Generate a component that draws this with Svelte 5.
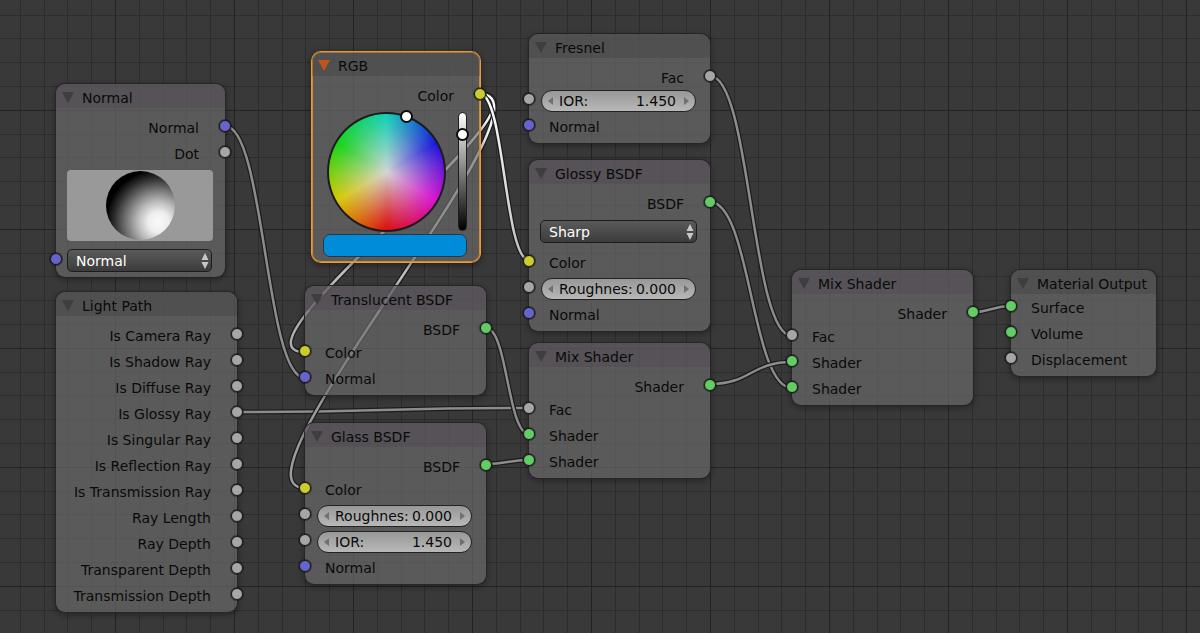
<script lang="ts">
  type Row = { label: string; type?: string; kind?: string; value?: string };
  type Node = {
    id: string;
    title: string;
    x: number;
    y: number;
    width: number;
    tint?: boolean;
    selected?: boolean;
    outputs?: Row[];
    dropdown?: string;
    inputs?: Row[];
  };

  const nodes: Node[] = [
    {
      id: 'normal', title: 'Normal', x: 56, y: 84, width: 169, tint: true,
      outputs: [{ label: 'Normal', type: 'vector' }, { label: 'Dot', type: 'value' }]
    },
    {
      id: 'light', title: 'Light Path', x: 56, y: 292, width: 181,
      outputs: [
        'Is Camera Ray', 'Is Shadow Ray', 'Is Diffuse Ray', 'Is Glossy Ray',
        'Is Singular Ray', 'Is Reflection Ray', 'Is Transmission Ray', 'Ray Length',
        'Ray Depth', 'Transparent Depth', 'Transmission Depth'
      ].map((label) => ({ label, type: 'value' }))
    },
    {
      id: 'rgb', title: 'RGB', x: 312, y: 52, width: 168, selected: true,
      outputs: [{ label: 'Color', type: 'color' }]
    },
    {
      id: 'translucent', title: 'Translucent BSDF', x: 305, y: 286, width: 181, tint: true,
      outputs: [{ label: 'BSDF', type: 'shader' }],
      inputs: [{ label: 'Color', type: 'color' }, { label: 'Normal', type: 'vector' }]
    },
    {
      id: 'glass', title: 'Glass BSDF', x: 305, y: 423, width: 181, tint: true,
      outputs: [{ label: 'BSDF', type: 'shader' }],
      inputs: [
        { label: 'Color', type: 'color' },
        { label: 'Roughnes:', type: 'value', value: '0.000' },
        { label: 'IOR:', type: 'value', value: '1.450' },
        { label: 'Normal', type: 'vector' }
      ]
    },
    {
      id: 'fresnel', title: 'Fresnel', x: 529, y: 34, width: 181,
      outputs: [{ label: 'Fac', type: 'value' }],
      inputs: [
        { label: 'IOR:', type: 'value', value: '1.450' },
        { label: 'Normal', type: 'vector' }
      ]
    },
    {
      id: 'glossy', title: 'Glossy BSDF', x: 529, y: 160, width: 181, tint: true,
      outputs: [{ label: 'BSDF', type: 'shader' }],
      dropdown: 'Sharp',
      inputs: [
        { label: 'Color', type: 'color' },
        { label: 'Roughnes:', type: 'value', value: '0.000' },
        { label: 'Normal', type: 'vector' }
      ]
    },
    {
      id: 'mix1', title: 'Mix Shader', x: 529, y: 343, width: 181, tint: true,
      outputs: [{ label: 'Shader', type: 'shader' }],
      inputs: [
        { label: 'Fac', type: 'value' },
        { label: 'Shader', type: 'shader' },
        { label: 'Shader', type: 'shader' }
      ]
    },
    {
      id: 'mix2', title: 'Mix Shader', x: 792, y: 270, width: 181, tint: true,
      outputs: [{ label: 'Shader', type: 'shader' }],
      inputs: [
        { label: 'Fac', type: 'value' },
        { label: 'Shader', type: 'shader' },
        { label: 'Shader', type: 'shader' }
      ]
    },
    {
      id: 'output', title: 'Material Output', x: 1011, y: 270, width: 145,
      inputs: [
        { label: 'Surface', type: 'shader' },
        { label: 'Volume', type: 'shader' },
        { label: 'Displacement', type: 'value' }
      ]
    }
  ];

  // from x, from y, to x, to y, highlighted
  const links: [number, number, number, number, boolean][] = [
    [225, 126, 305, 378, false],
    [237, 412, 529, 408, false],
    [486, 328, 529, 434, false],
    [486, 464, 529, 460, false],
    [710, 76, 792, 336, false],
    [710, 202, 792, 388, false],
    [710, 384, 792, 362, false],
    [973, 312, 1011, 306, false],
    [480, 94, 305, 352, true],
    [480, 94, 305, 488, true],
    [480, 94, 529, 260, true]
  ];

  function curve(x1: number, y1: number, x2: number, y2: number) {
    const h = Math.abs(x2 - x1) / 2;
    return `M${x1} ${y1}C${x1 + h} ${y1} ${x2 - h} ${y2} ${x2} ${y2}`;
  }

  let brightness = 86;
  let swatch = '#008cd9';
</script>

{#snippet dropdown(value: string, name: string)}
  <div class="dropdown">
    <select aria-label={name}>
      <option>{value}</option>
    </select>
    <svg class="updown" viewBox="0 0 8 16" aria-hidden="true">
      <path d="M4 0L7.500 7H.5zM4 16L.5 9H7.500z" />
    </svg>
  </div>
{/snippet}

<main>
  <svg class="backdrop" aria-hidden="true">
    <defs>
      <pattern id="grid" x="115" y="110" width="119" height="119" patternUnits="userSpaceOnUse">
        <path class="minor" d="M24.500 0V119M48.500 0V119M71.500 0V119M95.500 0V119M0 24.500H119M0 47.500H119M0 71.500H119M0 95.500H119" />
        <path class="major" d="M.5 0V119M0 .5H119" />
      </pattern>
      <linearGradient id="fade" gradientUnits="userSpaceOnUse" x1="0" y1="94" x2="0" y2="400">
        <stop offset="0" stop-color="#fff" />
        <stop offset=".5" stop-color="#c4c4c4" />
        <stop offset="1" stop-color="#9c9c9c" />
      </linearGradient>
    </defs>
    <rect width="100%" height="100%" fill="url(#grid)" />
    {#each links as [x1, y1, x2, y2, active]}
      <path class="link-edge" d={curve(x1, y1, x2, y2)} />
      <path class="link" class:active d={curve(x1, y1, x2, y2)} />
    {/each}
  </svg>

  {#each nodes as node}
    <section
      class="node"
      class:tint={node.tint}
      class:selected={node.selected}
      style="left: {node.x}px; top: {node.y}px; width: {node.width}px"
    >
      <header>
        <button class="collapse" aria-label="Collapse {node.title}">
          <svg viewBox="0 0 12 11" aria-hidden="true"><path d="M0 0H12L6 11z" /></svg>
        </button>
        <h2>{node.title}</h2>
      </header>

      <div class="body" class:tight={!node.outputs}>
        {#if node.outputs}
          <div class="rows">
            {#each node.outputs as out}
              <div class="row out">
                <span>{out.label}</span>
                <i class="socket {out.type}"></i>
              </div>
            {/each}
          </div>
        {/if}

        {#if node.id === 'normal'}
          <div class="preview"><div class="ball"></div></div>
          <div class="row direction">
            <i class="socket vector"></i>
            {@render dropdown('Normal', 'Direction')}
          </div>
        {/if}

        {#if node.id === 'rgb'}
          <div class="picker">
            <div class="wheel"><i class="handle"></i></div>
            <div class="brightness">
              <input type="range" min="0" max="100" aria-label="Brightness" bind:value={brightness} />
            </div>
          </div>
          <input class="swatch" type="color" aria-label="Color" bind:value={swatch} />
        {/if}

        {#if node.dropdown}
          <div class="distribution">{@render dropdown(node.dropdown, 'Distribution')}</div>
        {/if}

        {#if node.inputs}
          <div class="rows">
            {#each node.inputs as input, i}
              <div class="row in">
                <i class="socket {input.type}"></i>
                {#if input.value}
                  <div class="field">
                    <svg viewBox="0 0 5 8" aria-hidden="true"><path d="M5 0V8L0 4z" /></svg>
                    <label for="{node.id}-{i}">{input.label}</label>
                    <input id="{node.id}-{i}" type="text" value={input.value} />
                    <svg viewBox="0 0 5 8" aria-hidden="true"><path d="M0 0V8L5 4z" /></svg>
                  </div>
                {:else}
                  <span>{input.label}</span>
                {/if}
              </div>
            {/each}
          </div>
        {/if}
      </div>
    </section>
  {/each}
</main>

<style>
  :global(body) {
    margin: 0;
    background: #393939;
  }

  main {
    position: relative;
    min-height: 100vh;
    overflow: hidden;
    font-family: 'DejaVu Sans', sans-serif;
    font-size: 14px;
    line-height: 22px;
    color: #0a0a0a;
  }

  .backdrop {
    position: absolute;
    width: 100%;
    height: 100%;
  }

  .backdrop path {
    fill: none;
  }

  .minor {
    stroke: #2d2d2d;
  }

  .major {
    stroke: #232323;
  }

  .link-edge {
    stroke: #1c1c1c;
    stroke-width: 5;
  }

  .link {
    stroke: #8c8c8c;
    stroke-width: 2.5;
  }

  .link.active {
    stroke: url(#fade);
  }

  .node {
    position: absolute;
    border-radius: 9px;
    background: rgba(108, 108, 108, 0.66);
    box-shadow: 0 0 0 1px #262626, 0 2px 6px 1px rgba(0, 0, 0, 0.35);
  }

  .node.selected {
    box-shadow: 0 0 0 1px #eb9a3a, inset 0 0 0 1px #d08a38, 0 2px 6px 2px rgba(0, 0, 0, 0.35);
  }

  header {
    display: flex;
    align-items: center;
    box-sizing: border-box;
    height: 24px;
    padding: 3px 0 0 6px;
    border-radius: 9px 9px 0 0;
    background: rgba(60, 60, 60, 0.3);
  }

  .tint header {
    background: rgba(78, 66, 82, 0.32);
  }

  h2 {
    margin: 0;
    font-size: 14px;
    font-weight: 400;
    white-space: nowrap;
  }

  .collapse {
    display: flex;
    width: 20px;
    padding: 0;
    border: 0;
    background: none;
  }

  .collapse svg {
    width: 12px;
    height: 11px;
    fill: #3e3d3f;
  }

  .selected .collapse svg {
    fill: #bf5518;
  }

  .body {
    display: flex;
    flex-direction: column;
    gap: 1px;
    padding: 9px 0 5px;
  }

  .body.tight {
    padding-top: 3px;
  }

  .rows {
    display: flex;
    flex-direction: column;
    gap: 4px;
  }

  .row {
    position: relative;
    display: flex;
    align-items: center;
    height: 22px;
    white-space: nowrap;
  }

  .out {
    justify-content: flex-end;
    padding-right: 26px;
  }

  .in {
    padding-left: 20px;
  }

  .in:has(.field) {
    padding: 0 14px 0 12px;
  }

  .direction {
    height: 24px;
  }

  .socket {
    position: absolute;
    top: 3px;
    left: -6px;
    box-sizing: border-box;
    width: 12px;
    height: 12px;
    border: 1px solid #181818;
    border-radius: 50%;
    background: #a6a6a6;
    box-shadow: 0 0 0 1px rgba(20, 20, 20, 0.5);
  }

  .direction .socket {
    top: 5px;
  }

  .out .socket {
    right: -6px;
    left: auto;
  }

  .vector {
    background: #6464cc;
  }

  .color {
    background: #cccc2c;
  }

  .shader {
    background: #64cc64;
  }

  .field {
    flex: 1;
    display: flex;
    align-items: center;
    box-sizing: border-box;
    min-width: 0;
    height: 22px;
    padding: 0 6px;
    border: 1px solid #232323;
    border-radius: 11px;
    background: linear-gradient(#989898, #b8b8b8);
  }

  .field svg {
    width: 5px;
    height: 8px;
    fill: #707070;
  }

  .field label {
    margin-left: 6px;
  }

  .field input {
    flex: 1;
    min-width: 0;
    margin-right: 8px;
    padding: 0;
    border: 0;
    outline: 0;
    background: none;
    color: #0a0a0a;
    font: inherit;
    text-align: right;
  }

  .dropdown {
    position: relative;
    flex: 1;
    margin: 0 13px 0 11px;
  }

  .dropdown select {
    display: block;
    box-sizing: border-box;
    width: 100%;
    height: 23px;
    padding: 0 8px;
    border: 1px solid #1c1c1c;
    border-radius: 5px;
    background: linear-gradient(#5a5a5a, #3c3c3c);
    color: #fff;
    font: inherit;
    appearance: none;
  }

  .updown {
    position: absolute;
    top: 4px;
    right: 3px;
    width: 8px;
    height: 16px;
  }

  .backdrop ~ .node .updown path {
    fill: #c8c8c8;
  }

  .distribution {
    padding: 4px 0 8px;
  }

  .preview {
    display: flex;
    justify-content: center;
    margin: 4px 12px 6px 11px;
    padding: 1px 0;
    border-radius: 4px;
    background: #999;
  }

  .ball {
    width: 69px;
    height: 69px;
    border-radius: 50%;
    background: radial-gradient(circle at 76% 74%, #fafafa 0, #eee 14%, #bbb 28%, #7a7a7a 43%, #333 59%, #000 72%);
  }

  .picker {
    display: flex;
    gap: 12px;
    margin: 4px 13px 1px 15px;
  }

  .wheel {
    position: relative;
    box-sizing: border-box;
    width: 120px;
    height: 120px;
    border: 2px solid #1c1c1c;
    border-radius: 50%;
    background:
      radial-gradient(closest-side, #d4d4d4, rgba(212, 212, 212, 0.55) 40%, rgba(212, 212, 212, 0.22) 72%, transparent 98%) border-box,
      conic-gradient(from 180deg, #dc0c0c, #d8c800 60deg, #10d410 120deg, #10d0b8 180deg, #1414dc 240deg, #d80cd0 300deg, #dc0c0c) border-box;
  }

  .handle {
    position: absolute;
    top: -4px;
    left: 71px;
    box-sizing: border-box;
    width: 13px;
    height: 13px;
    border: 2px solid #0c0c0c;
    border-radius: 50%;
    background: #fff;
  }

  .brightness {
    display: flex;
    justify-content: center;
    box-sizing: border-box;
    width: 9px;
    height: 119px;
    border: 1px solid #1c1c1c;
    border-radius: 5px;
    background: linear-gradient(#fff, #000);
  }

  .brightness input {
    flex: none;
    width: 13px;
    height: 117px;
    margin: 0;
    background: none;
    appearance: none;
    writing-mode: vertical-lr;
    direction: rtl;
  }

  .brightness input::-webkit-slider-thumb {
    box-sizing: border-box;
    width: 13px;
    height: 13px;
    border: 2px solid #0c0c0c;
    border-radius: 50%;
    background: #fff;
    appearance: none;
  }

  .swatch {
    box-sizing: border-box;
    width: auto;
    height: 23px;
    margin: 0 13px 0 11px;
    padding: 0;
    border: 1px solid #1c3a50;
    border-radius: 7px;
    background: none;
    overflow: hidden;
    appearance: none;
  }

  .swatch::-webkit-color-swatch-wrapper {
    padding: 0;
  }

  .swatch::-webkit-color-swatch {
    border: 0;
    border-radius: 0;
  }
</style>
